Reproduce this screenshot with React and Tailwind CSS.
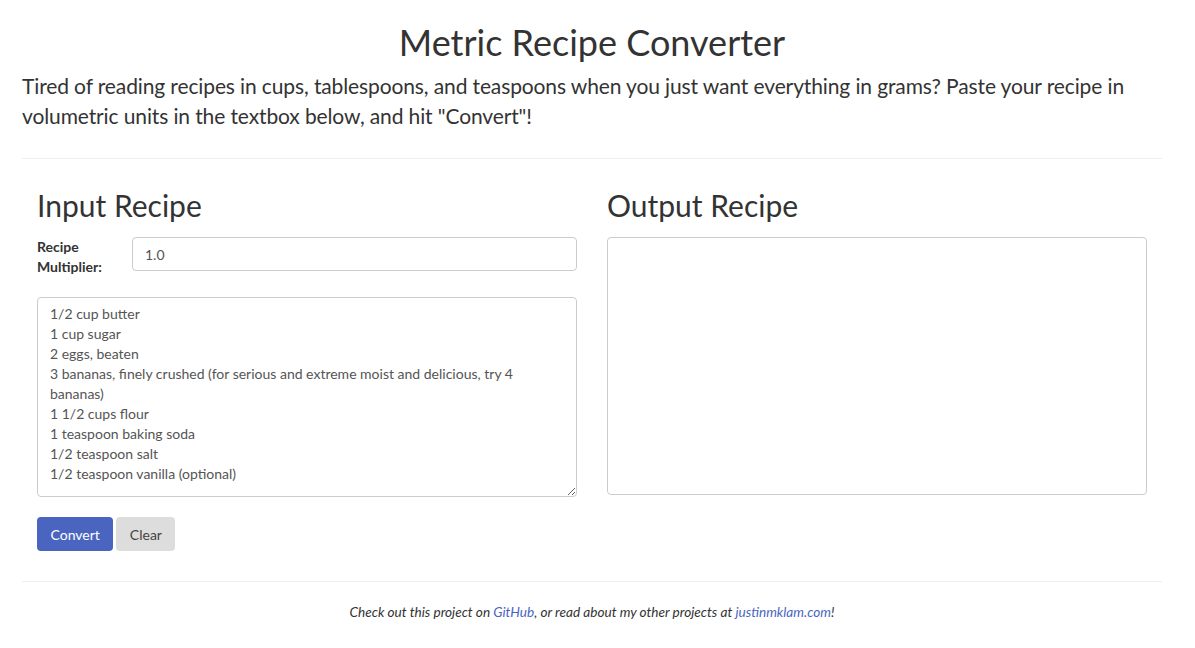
const recipe = `1/2 cup butter
1 cup sugar
2 eggs, beaten
3 bananas, finely crushed (for serious and extreme moist and delicious, try 4 bananas)
1 1/2 cups flour
1 teaspoon baking soda
1/2 teaspoon salt
1/2 teaspoon vanilla (optional)`;

export default function App() {
  return (
    <div className="min-h-screen bg-white text-[#333] font-['Lato','Open_Sans',sans-serif]">
      <div className="ml-[22px] w-[1140px]">
        {/* Header */}
        <h1 className="pt-[22px] text-center text-[36px] leading-[40px] font-normal">
          Metric Recipe Converter
        </h1>
        <p className="mt-[9px] text-[21px] leading-[30px] font-normal tracking-[-0.12px]">
          Tired of reading recipes in cups, tablespoons, and teaspoons when you just want everything in grams? Paste your recipe in volumetric units in the textbox below, and hit "Convert"!
        </p>
        <hr className="mt-[27px] border-t border-[#eee]" />

        <div className="grid grid-cols-2">
          {/* Input column */}
          <div className="px-[15px]">
            <h2 className="mt-[30px] text-[30px] leading-[33px] font-normal">Input Recipe</h2>
            <div className="mt-[15px] flex items-start">
              <label className="w-[95px] text-[14px] leading-[20px] font-bold">
                Recipe Multiplier:
              </label>
              <input
                defaultValue="1.0"
                className="h-[34px] flex-1 rounded-[4px] border border-[#ccc] px-[12px] text-[14px] text-[#555] outline-none"
              />
            </div>
            <textarea
              defaultValue={recipe}
              className="mt-[20px] block h-[200px] w-full rounded-[4px] border border-[#ccc] px-[12px] py-[6px] text-[14px] leading-[20px] text-[#555] outline-none"
            />
            <div className="mt-[20px] flex gap-[3px]">
              <button className="h-[34px] rounded-[4px] bg-[#4a65bf] px-[13.5px] text-[14px] text-white">
                Convert
              </button>
              <button className="h-[34px] rounded-[4px] bg-[#ddd] px-[13.5px] text-[14px] text-[#444]">
                Clear
              </button>
            </div>
          </div>

          {/* Output column */}
          <div className="px-[15px]">
            <h2 className="mt-[30px] text-[30px] leading-[33px] font-normal">Output Recipe</h2>
            <textarea
              readOnly
              className="mt-[15px] block h-[258px] w-full resize-none rounded-[4px] border border-[#ccc] px-[12px] py-[6px] text-[14px] leading-[20px] outline-none"
            />
          </div>
        </div>

        <hr className="mt-[30px] border-t border-[#eee]" />
        <p className="mt-[20px] text-center text-[13.6px] leading-[20px] italic">
          Check out this project on <a href="#" className="text-[#4a65bf]">GitHub</a>, or read about my other projects at{" "}
          <a href="#" className="text-[#4a65bf]">justinmklam.com</a>!
        </p>
      </div>
    </div>
  );
}
